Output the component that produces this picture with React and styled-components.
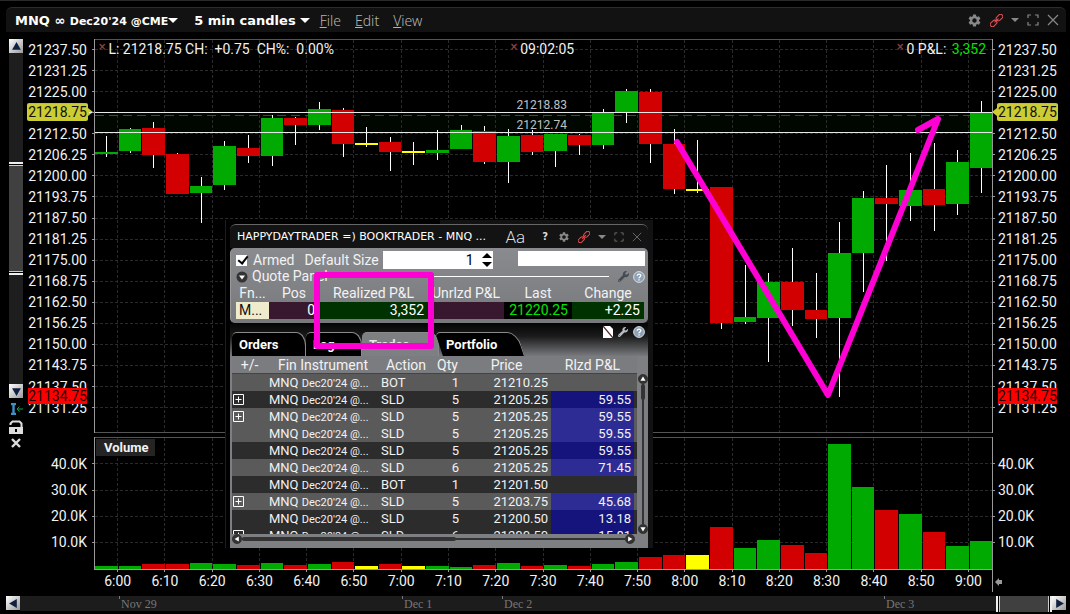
import React from 'react';
import styled, { createGlobalStyle, css } from 'styled-components';
import { MdSettings } from 'react-icons/md';
import { FaWrench } from 'react-icons/fa';

const GlobalStyle = createGlobalStyle`
* {
    box-sizing: border-box;
}

body {
    margin: 0;
    background: #000;
    color: #f2f2f2;
    font-family: Roboto, sans-serif;
    font-size: 14px;
}

button {
    padding: 0;
    border: 0;
    background: none;
    color: inherit;
    font: inherit;
}
`;

const UP = '#00aa00';
const DOWN = '#d20000';
const FLAT = '#ffff00';
const MARKER = '#ff00d4';

/* ---------- data ---------- */

// [colour, body top, body bottom, high, low, volume top]
const bars = [
    [UP, 152, 154, 136, 157, 566],
    [UP, 129, 151, 128, 153, 566],
    [DOWN, 128, 155, 122, 168, 564],
    [DOWN, 154, 194, 153, 194, 564],
    [UP, 186, 193, 177, 223, 563],
    [UP, 146, 185, 141, 190, 564],
    [DOWN, 148, 156, 135, 163, 565],
    [UP, 118, 156, 115, 166, 563],
    [DOWN, 118, 125, 117, 145, 565],
    [UP, 109, 125, 102, 130, 564],
    [DOWN, 110, 144, 108, 157, 562],
    [FLAT, 143, 145, 127, 147, 566],
    [DOWN, 142, 152, 137, 171, 564],
    [FLAT, 151, 153, 142, 165, 566],
    [UP, 150, 153, 130, 160, 566],
    [UP, 130, 149, 125, 149, 567],
    [DOWN, 131, 162, 126, 164, 565],
    [UP, 136, 162, 129, 183, 563],
    [DOWN, 135, 152, 130, 155, 566],
    [UP, 134, 151, 134, 167, 565],
    [DOWN, 135, 145, 134, 155, 566],
    [UP, 113, 145, 109, 149, 564],
    [UP, 91, 112, 89, 123, 562],
    [DOWN, 92, 144, 89, 163, 557],
    [DOWN, 144, 189, 129, 194, 555],
    [FLAT, 189, 191, 140, 193, 555],
    [DOWN, 187, 323, 187, 329, 527],
    [UP, 317, 322, 265, 324, 548],
    [UP, 282, 318, 273, 362, 540],
    [DOWN, 282, 310, 248, 326, 545],
    [DOWN, 310, 319, 273, 338, 553],
    [UP, 253, 318, 222, 397, 444],
    [UP, 198, 253, 191, 292, 487],
    [DOWN, 198, 204, 165, 261, 510],
    [UP, 190, 206, 153, 221, 514],
    [DOWN, 189, 205, 143, 231, 532],
    [UP, 162, 204, 150, 215, 546],
    [UP, 113, 168, 101, 193, 541],
];

const barX = i => Math.round(95 + 23.65 * i);

const gridX = [117, 164, 212, 259, 306, 353, 401, 448, 495, 543, 590, 637, 684, 732, 779, 826, 873, 921, 968];
const gridY = Array.from({ length: 18 }, (_, i) => 49 + 21 * i + (i >= 8 ? 1 : 0));
const volumeY = [463, 490, 516, 542];

const times = ['6:00', '6:10', '6:20', '6:30', '6:40', '6:50', '7:00', '7:10', '7:20', '7:30',
    '7:40', '7:50', '8:00', '8:10', '8:20', '8:30', '8:40', '8:50', '9:00'];
const prices = gridY.map((_, i) => (21237.5 - 6.25 * i).toFixed(2));
const volumes = ['40.0K', '30.0K', '20.0K', '10.0K'];

const trades = [
    { action: 'BOT', qty: 1, price: '21210.25', light: true },
    { open: true, action: 'SLD', qty: 5, price: '21205.25', pnl: '59.55' },
    { open: true, action: 'SLD', qty: 5, price: '21205.25', pnl: '59.55', light: true },
    { action: 'SLD', qty: 5, price: '21205.25', pnl: '59.55', light: true },
    { action: 'SLD', qty: 5, price: '21205.25', pnl: '59.55' },
    { action: 'SLD', qty: 6, price: '21205.25', pnl: '71.45', light: true },
    { action: 'BOT', qty: 1, price: '21201.50' },
    { open: true, action: 'SLD', qty: 5, price: '21203.75', pnl: '45.68', light: true },
    { action: 'SLD', qty: 5, price: '21200.50', pnl: '13.18' },
    { open: true, action: 'SLD', qty: 6, price: '21200.50', pnl: '15.81' },
];

/* ---------- frame ---------- */

const Desktop = styled.div`
position: relative;
min-width: 960px;
padding: 6px 4px 3px 6px;
border-top: 1px solid #2a2a2a;
`;

const TitleBar = styled.header`
display: flex;
align-items: center;
height: 25px;
padding: 0 7px 0 9px;
border-top: 1px solid #2c2c2c;
border-radius: 6px 6px 0 0;
background: #121212;
`;

const Picker = styled.button`
display: flex;
align-items: center;
gap: ${props => props.$gap}px;
margin-right: ${props => props.$space}px;
color: #fff;
font: 700 13px 'DejaVu Sans', sans-serif;
white-space: nowrap;

small {
    font-size: 11px;
}
`;

const Caret = styled.i`
width: 0;
border: ${props => props.$size}px solid transparent;
border-top-color: ${props => props.$color};
border-bottom: 0;
transform: ${props => props.$flip ? 'rotate(180deg)' : 'none'};
`;

const MenuButton = styled.button`
margin-right: 14px;
color: #b4b4ac;
font: 300 14px 'Noto Sans', sans-serif;

&::first-letter {
    text-decoration: underline;
}
`;

const WindowIcons = styled.div`
display: flex;
align-items: center;
gap: ${props => props.$gap}px;
margin-left: auto;
color: ${props => props.$color};

button {
    display: flex;
}
`;

/* ---------- chart ---------- */

const Main = styled.main`
display: flex;
margin-top: 7px;
`;

const Tools = styled.aside`
display: flex;
flex-direction: column;
align-items: center;
width: 14px;
margin-left: 3px;
`;

const ArrowButton = styled.button`
display: flex;
align-items: center;
justify-content: center;
width: 14px;
height: 14px;
flex: none;
background: linear-gradient(135deg, #fff, #9a9a9a);
`;

const Slider = styled.div`
display: flex;
flex-direction: column;
width: 14px;
height: 331px;
padding: 109px 0;
background: #1e1e1e;
`;

const SliderThumb = styled.div`
flex: 1;
background: linear-gradient(${props => props.$vertical ? '90deg' : '180deg'},
    #eee 2px, #000 2px 3px, #ccc 3px 4px,
    #404040 4px calc(100% - 4px),
    #ccc calc(100% - 4px) calc(100% - 3px), #000 calc(100% - 3px) calc(100% - 2px), #eee calc(100% - 2px));
`;

const ToolButton = styled.button`
display: flex;
height: 12px;
margin-top: 5px;
`;

const Plots = styled.div`
display: grid;
grid-template-columns: 71px 1fr 73px;
flex: 1;
min-width: 0;
`;

const Cell = styled.div`
position: relative;
margin-bottom: ${props => props.$gap || 0}px;
`;

const Graph = styled.svg`
display: block;
width: 100%;
height: ${props => props.$height}px;
overflow: visible;
shape-rendering: crispEdges;
`;

const PriceAxis = styled.ol`
display: flex;
flex-direction: column;
height: 379px;
margin: 0;
padding: ${props => props.$right ? '0 0 0 5px' : '0 7px 0 0'};
align-items: ${props => props.$right ? 'flex-start' : 'flex-end'};
list-style: none;
`;

const VolumeAxis = styled(PriceAxis)`
height: 118px;
padding-top: 14px;
`;

const Tick = styled.li`
display: flex;
align-items: center;
flex: 1;
line-height: 16px;
`;

const Tag = styled.b`
position: relative;
margin: 0 -1px;
padding: 0 1px;
border-radius: 2px;
background: #cccc33;
box-shadow: 0 -1px #e0a080;
color: #111;
font-weight: 400;
line-height: 17px;

&::after {
    content: '';
    position: absolute;
    top: 4px;
    ${props => props.$right ? 'left' : 'right'}: -5px;
    border: 4px solid transparent;
    border-width: ${props => props.$right ? '4px 5px 4px 0' : '4px 0 4px 5px'};
    border-left-color: #cccc33;
    border-right-color: #cccc33;
}
`;

const LowBadge = styled.span`
position: absolute;
top: 349px;
${props => props.$right ? 'left: 5px' : 'right: 7px'};
background: #ff0000;
color: #200;
line-height: 16px;
`;

const Overlay = styled.div`
position: absolute;
inset: 2px 7px auto 4px;
display: grid;
grid-template-columns: 1fr auto 1fr;
line-height: 16px;
white-space: pre;
`;

const Readout = styled.span`
display: flex;
gap: 2px;
justify-content: ${props => props.$end ? 'flex-end' : 'flex-start'};

em {
    color: #00e600;
    font-style: normal;
}
`;

const Cross = styled.i`
color: #884444;
font: 700 10px/12px 'DejaVu Sans', sans-serif;
`;

const LineLabel = styled.span`
position: absolute;
top: ${props => props.$top}px;
left: 50%;
margin-left: -27px;
color: #c0c0c0;
font-size: 12px;
line-height: 14px;
`;

const VolumeTitle = styled.h2`
position: absolute;
top: 2px;
left: 2px;
margin: 0;
padding: 0 6px 0 8px;
background: #242424;
font-size: 13px;
font-weight: 700;
line-height: 17px;
`;

const TimeAxis = styled.ol`
display: flex;
grid-column: 2;
height: 22px;
margin: 0;
padding: 3px 0 0;
border-right: 1px solid #999;
list-style: none;
text-align: center;
line-height: 17px;

li {
    flex: 1 1 0;
}
`;

const AxisArrow = styled.span`
padding: 8px 0 0 2px;
line-height: 0;
`;

const Timeline = styled.footer`
display: flex;
height: 15px;
margin-top: 4px;
`;

const TimelineTrack = styled.div`
display: grid;
grid-template-columns: 99fr 283fr 100fr 382fr 112fr 56fr;
flex: 1;
background: #1c1c1c;
`;

const DateMark = styled.span`
padding-left: 2px;
background: linear-gradient(#777, #777) no-repeat 0 0 / 1px 3px;
color: #777;
font: 12px/16px 'Liberation Serif', serif;
`;

/* ---------- BookTrader window ---------- */

const Floating = styled.section`
position: absolute;
top: 219px;
left: 225px;
width: 428px;
padding: 4px 5px 0 4px;
border-left: 1px solid #1d1d1d;
background: linear-gradient(90deg, #000 50%, #121212 50%);
`;

const FloatBar = styled.header`
display: flex;
align-items: center;
height: 24px;
padding: 0 6px 0 7px;
border-top: 1px solid #666;
border-radius: 6px 6px 0 0;
background: #131313;
color: #fff;
`;

const FloatTitle = styled.h1`
margin: 0;
font: 400 11px 'DejaVu Sans', sans-serif;
white-space: nowrap;
`;

const FontButton = styled.button`
margin-right: 9px;
color: #ddd;
font-size: 17px;
font-weight: 300;
`;

const HelpButton = styled.button`
margin-right: 2px;
color: #ddd;
font: 700 10px 'DejaVu Sans', sans-serif;
`;

const Quote = styled.div`
height: 75px;
padding: 3px 3px 0 5px;
border-left: 1px solid #999;
border-radius: 5px;
background: linear-gradient(#898b8f, #77797d);
`;

const OrderLine = styled.div`
display: flex;
align-items: flex-start;
height: 17px;
`;

const Armed = styled.label`
display: flex;
align-items: center;
gap: 6px;
margin-right: 10px;
line-height: 18px;
`;

const Check = styled.input`
position: relative;
width: 11px;
height: 11px;
margin: 0;
background: #fff;
appearance: none;

&:checked::after {
    content: '';
    position: absolute;
    top: -1px;
    left: 4px;
    width: 4px;
    height: 8px;
    border: solid #000;
    border-width: 0 2px 2px 0;
    transform: rotate(38deg);
}
`;

const SizeLabel = styled.label`
line-height: 18px;
`;

const SizeBox = styled.span`
display: flex;
align-items: center;
width: 110px;
height: 18px;
margin: 0 25px 0 4px;
background: #fff;
`;

const SizeInput = styled.input`
flex: 1;
min-width: 0;
padding: 0 8px 0 0;
border: 0;
background: none;
color: #000;
font: 14px Roboto, sans-serif;
text-align: right;
`;

const Spinner = styled.span`
display: flex;
flex-direction: column;
gap: 4px;
margin-right: 1px;

button {
    display: flex;
}
`;

const Note = styled.input`
flex: 1;
min-width: 0;
height: 15px;
padding: 0;
border: 0;
background: #fff;
`;

const QuoteHeading = styled.div`
display: flex;
align-items: center;
gap: 4px;
height: 17px;
line-height: 17px;
`;

const Rule = styled.hr`
flex: 1;
height: 1px;
margin: 0 5px 0 -3px;
border: 0;
background: #fff;
`;

const QuoteTable = styled.table`
width: 408px;
border-collapse: collapse;
table-layout: fixed;

th, td {
    height: 17px;
    padding: 0 4px 0 3px;
    font-weight: 400;
    line-height: 17px;
    white-space: nowrap;
}

th {
    padding: 0;
}
`;

const QuoteCell = styled.td`
background: ${props => props.$bg};
color: ${props => props.$color || '#fff'};
text-align: ${props => props.$align || 'right'};
`;

const TabStrip = styled.div`
display: flex;
align-items: flex-end;
height: 33px;
padding-left: 2px;
background: linear-gradient(#050505, #1a1a1a 40%, #77797d);
`;

const Tab = styled.button`
position: relative;
isolation: isolate;
width: ${props => props.$width}px;
height: 24px;
padding-left: 7px;
color: ${props => props.$active ? '#e8e8e8' : '#fff'};
font-size: 13px;
font-weight: 700;
text-align: left;

&::before {
    content: '';
    position: absolute;
    inset: 0;
    z-index: -1;
    border: solid #8a8a8a;
    border-width: 1px 1px 0 0;
    border-radius: 5px 10px 0 0 / 5px 14px 0 0;
    background: ${props => props.$active ? '#7d7f83' : '#000'};
    transform: ${props => props.$slanted ? 'skewX(18deg)' : 'none'};
}
`;

const TabIcons = styled.div`
display: flex;
gap: 5px;
margin: 0 3px 0 auto;
align-self: flex-start;
align-items: center;
padding-top: 3px;
`;

const TradesArea = styled.div`
display: grid;
grid-template-columns: 1fr 11px;
padding-left: 2px;
background: #7d7f83;
`;

const Clip = styled.div`
height: 178px;
overflow: hidden;
`;

const TradesTable = styled.table`
width: 100%;
border-collapse: collapse;
table-layout: fixed;
font-size: 13px;

th {
    height: 18px;
    padding: 0;
    background: #7a7c80;
    box-shadow: inset 0 -1px #444;
    font-size: 14px;
    font-weight: 400;
    line-height: 17px;
    white-space: nowrap;
}

td {
    height: 17px;
    padding: 0 3px 0 2px;
    line-height: 17px;
    white-space: nowrap;
}

td:first-child {
    padding: 0 0 0 1px;
}
`;

const TradeRow = styled.tr`
background: ${props => props.$light ? '#5a5a5a' : '#2c2c2c'};

small {
    font-size: 11px;
    line-height: 11px;
}
`;

const NumberCell = styled.td`
text-align: right;

${props => props.$pnl && css`
background: ${props.$light ? '#2c2c94' : '#14147c'};
`}
`;

const Expand = styled.button`
display: flex;
`;

const ScrollBar = styled.div`
display: flex;
flex-direction: ${props => props.$vertical ? 'column' : 'row'};
align-items: center;
padding: ${props => props.$vertical ? '18px 0 0' : '0 2px 4px 0'};
`;

const Rail = styled.div`
display: flex;
flex: 1;
align-self: center;
${props => props.$vertical ? 'width: 4px' : 'height: 4px'};
background: linear-gradient(${props => props.$vertical ? '90deg' : '180deg'}, transparent 25%, #333 25%, #333 75%, transparent 75%);
`;

const RailThumb = styled.div`
${props => props.$vertical ? 'width: 4px; height: 16px' : 'width: 56%'};
border-radius: 2px;
background: #333;
`;

const Highlight = styled.div`
position: absolute;
top: 52px;
left: 88px;
width: 120px;
height: 77px;
border: 6px solid ${MARKER};
border-radius: 3px;
pointer-events: none;
`;

/* ---------- icons ---------- */

function Triangle({ dir, color = '#102040', size = 11 }) {
    const points = {
        up: '5,1 9,8 1,8',
        down: '1,2 9,2 5,9',
        left: '8,1 8,9 1,5',
        right: '2,1 9,5 2,9',
    };
    return (
        <svg width={size} height={size} viewBox="0 0 10 10" aria-hidden="true">
            <polygon points={points[dir]} fill={color} />
        </svg>
    );
}

function ChainIcon({ size }) {
    return (
        <svg width={size} height={size} viewBox="0 0 14 14" fill="none" stroke="#e8484c" strokeWidth="1.2">
            <g transform="rotate(-45 7 7)">
                <rect x="-1.5" y="4.6" width="8" height="4.8" rx="2.4" />
                <rect x="7.5" y="4.6" width="8" height="4.8" rx="2.4" />
                <path d="M4 7h6" />
            </g>
        </svg>
    );
}

function ExpandIcon({ size }) {
    return (
        <svg width={size} height={size} viewBox="0 0 12 12" fill="none" stroke="currentColor" strokeWidth="1.2">
            <path d="M1 4V1h3M8 1h3v3M11 8v3H8M4 11H1V8" />
        </svg>
    );
}

function CloseIcon({ size }) {
    return (
        <svg width={size} height={size} viewBox="0 0 12 12" fill="none" stroke="currentColor" strokeWidth="1.2">
            <path d="M1 1l10 10M11 1L1 11" />
        </svg>
    );
}

function RoundArrow({ dir }) {
    const turn = { up: 0, right: 90, down: 180, left: 270 }[dir];
    return (
        <svg width="10" height="10" viewBox="0 0 10 10">
            <circle cx="5" cy="5" r="4.6" fill="#333" stroke="#222" strokeWidth=".6" />
            <path d="M5 2.6L7.6 6.8H2.4z" fill="#fff" transform={`rotate(${turn} 5 5)`} />
        </svg>
    );
}

function HelpIcon() {
    return (
        <svg width="12" height="12" viewBox="0 0 12 12">
            <circle cx="6" cy="6" r="5.4" fill="#8ea3b8" stroke="#d8dce0" />
            <path d="M4.2 4.8c0-2.3 3.6-2.3 3.6-.2C7.8 6 6 5.9 6 7.2M6 8.3v1.2" fill="none" stroke="#fff" strokeWidth="1.3" />
        </svg>
    );
}

function PlusBox() {
    return (
        <svg width="11" height="11" viewBox="0 0 11 11" fill="none" stroke="#fff">
            <path d="M.5.5h10v10H.5zM5.5 2.5v6M2.5 5.5h6" />
        </svg>
    );
}

/* ---------- parts ---------- */

function PriceGraph() {
    return (
        <Graph $height={394} viewBox="94 39 899 394" preserveAspectRatio="none">
            <rect x="95" y="113" width="897" height="19" fill="#000600" />
            <g stroke="#2a2a2a" strokeDasharray="3 2">
                {gridX.map(x => <path key={x} d={`M${x}.5 40V432`} />)}
                {gridY.map(y => <path key={y} d={`M95 ${y}.5H992`} />)}
            </g>
            <path d="M95 115.5H992" stroke="#3c4a3c" strokeDasharray="9 5" />
            {bars.map(([color, top, bottom, high, low], i) => (
                <g key={i}>
                    <rect x={barX(i) + 11} y={high} width="1" height={low - high} fill="#fff" />
                    <rect x={barX(i)} y={top} width={barX(i + 1) - barX(i) - 1} height={bottom - top} fill={color} />
                </g>
            ))}
            <path d="M89 112.5H992M95 132.5H992" stroke="#e8e8e8" />
            <path d="M94 39.5H993M94 432.5H993" stroke="#555" />
            <path d="M94.5 39V433M992.5 39V433" stroke="#999" />
            {gridY.map(y => <path key={y} d={`M92 ${y}.5h2M993 ${y}.5h2`} stroke="#999" />)}
            <path
                d="M677 142L828 395L938 119L918 130"
                fill="none"
                stroke={MARKER}
                strokeWidth="6"
                strokeLinecap="round"
                strokeLinejoin="round"
                shapeRendering="auto"
            />
        </Graph>
    );
}

function VolumeGraph() {
    return (
        <Graph $height={133} viewBox="94 437 899 133" preserveAspectRatio="none">
            <g stroke="#2a2a2a" strokeDasharray="3 2">
                {gridX.map(x => <path key={x} d={`M${x}.5 438V569`} />)}
                {volumeY.map(y => <path key={y} d={`M95 ${y}.5H992`} />)}
            </g>
            {bars.map((bar, i) => (
                <rect key={i} x={barX(i)} y={bar[5]} width={barX(i + 1) - barX(i) - 1} height={569 - bar[5]} fill={bar[0]} />
            ))}
            <path d="M94 437.5H993" stroke="#555" />
            <path d="M94 569.5H993M94.5 437V570M992.5 437V570" stroke="#999" />
            {volumeY.map(y => <path key={y} d={`M92 ${y}.5h2M993 ${y}.5h2`} stroke="#999" />)}
            {gridX.map(x => <path key={x} d={`M${x}.5 570v2`} stroke="#999" />)}
        </Graph>
    );
}

function Prices({ right }) {
    return (
        <Cell $gap={4}>
            <PriceAxis $right={right}>
                {prices.map(price => (
                    <Tick key={price}>
                        {price === '21218.75' ? <Tag $right={right}>{price}</Tag> : price}
                    </Tick>
                ))}
            </PriceAxis>
            <LowBadge $right={right}>21134.75</LowBadge>
        </Cell>
    );
}

function Volumes({ right }) {
    return (
        <VolumeAxis $right={right}>
            {volumes.map(volume => <Tick key={volume}>{volume}</Tick>)}
        </VolumeAxis>
    );
}

function ChartTools() {
    return (
        <Tools>
            <ArrowButton aria-label="Scroll up"><Triangle dir="up" /></ArrowButton>
            <Slider><SliderThumb /></Slider>
            <ArrowButton aria-label="Scroll down"><Triangle dir="down" /></ArrowButton>
            <ToolButton aria-label="Fit range">
                <svg width="13" height="12" viewBox="0 0 13 12">
                    <path d="M1 1h5M1 11h5M3.5 1v10" stroke="#3f8fc8" strokeWidth="2.4" />
                    <path d="M13 6H7M9.500 3.500L7 6l2.500 2.500" stroke="#00aa44" fill="none" />
                </svg>
            </ToolButton>
            <ToolButton aria-label="Unlock">
                <svg width="14" height="14" viewBox="0 0 14 14">
                    <path d="M1.5 5V3.500L3.500 1.500h7l2 2V8" stroke="#ddd" strokeWidth="2" fill="none" />
                    <path d="M0 7h14v7H0z" fill="#ddd" />
                    <path d="M6 9h2v3H6z" fill="#000" />
                </svg>
            </ToolButton>
            <ToolButton aria-label="Remove">
                <svg width="10" height="12" viewBox="0 0 10 12">
                    <path d="M1 2l8 8M9 2l-8 8" stroke="#ddd" strokeWidth="2.4" />
                </svg>
            </ToolButton>
        </Tools>
    );
}

function QuotePanel() {
    return (
        <Quote>
            <OrderLine>
                <Armed><Check type="checkbox" defaultChecked />Armed</Armed>
                <SizeLabel htmlFor="size">Default Size</SizeLabel>
                <SizeBox>
                    <SizeInput id="size" defaultValue="1" />
                    <Spinner>
                        <button aria-label="Increase"><Caret $size={5} $color="#000" $flip /></button>
                        <button aria-label="Decrease"><Caret $size={5} $color="#000" /></button>
                    </Spinner>
                </SizeBox>
                <Note aria-label="Note" />
            </OrderLine>
            <QuoteHeading>
                <svg width="12" height="12" viewBox="0 0 12 12">
                    <circle cx="6" cy="6" r="5.5" fill="#333" />
                    <path d="M3 4.5h6L6 8.500z" fill="#fff" />
                </svg>
                Quote Panel
                <Rule />
                <FaWrench size={11} color="#444b52" />
                <HelpIcon />
            </QuoteHeading>
            <QuoteTable>
                <colgroup>
                    <col width="33" /><col width="50" /><col width="109" />
                    <col width="76" /><col width="68" /><col width="72" />
                </colgroup>
                <thead>
                    <tr>
                        <th>Fn...</th><th>Pos</th><th>Realized P&amp;L</th>
                        <th>Unrlzd P&amp;L</th><th>Last</th><th>Change</th>
                    </tr>
                </thead>
                <tbody>
                    <tr>
                        <QuoteCell $bg="#eeeccc" $color="#111" $align="left">M...</QuoteCell>
                        <QuoteCell $bg="#38182e">0</QuoteCell>
                        <QuoteCell $bg="#003200">3,352</QuoteCell>
                        <QuoteCell $bg="#38182e" />
                        <QuoteCell $bg="#000" $color="#00e600">21220.25</QuoteCell>
                        <QuoteCell $bg="#003200">+2.25</QuoteCell>
                    </tr>
                </tbody>
            </QuoteTable>
        </Quote>
    );
}

function TradesList() {
    return (
        <TradesArea>
            <Clip>
                <TradesTable>
                    <colgroup>
                        <col width="35" /><col width="112" /><col width="54" />
                        <col width="29" /><col width="89" /><col /><col width="3" />
                    </colgroup>
                    <thead>
                        <tr>
                            <th>+/-</th><th>Fin Instrument</th><th>Action</th>
                            <th>Qty</th><th>Price</th><th>Rlzd P&amp;L</th><th />
                        </tr>
                    </thead>
                    <tbody>
                        {trades.map((trade, i) => (
                            <TradeRow key={i} $light={trade.light}>
                                <td>{trade.open && <Expand aria-label="Expand"><PlusBox /></Expand>}</td>
                                <td>MNQ <small>Dec20'24 @...</small></td>
                                <td>{trade.action}</td>
                                <NumberCell>{trade.qty}</NumberCell>
                                <NumberCell>{trade.price}</NumberCell>
                                <NumberCell $pnl={trade.pnl} $light={trade.light}>{trade.pnl}</NumberCell>
                                <td />
                            </TradeRow>
                        ))}
                    </tbody>
                </TradesTable>
            </Clip>
            <ScrollBar $vertical>
                <RoundArrow dir="up" />
                <Rail $vertical><RailThumb $vertical /></Rail>
                <RoundArrow dir="down" />
            </ScrollBar>
            <ScrollBar>
                <RoundArrow dir="left" />
                <Rail><RailThumb /></Rail>
                <RoundArrow dir="right" />
            </ScrollBar>
        </TradesArea>
    );
}

function BookTrader() {
    return (
        <Floating>
            <FloatBar>
                <FloatTitle>HAPPYDAYTRADER =) BOOKTRADER - MNQ ...</FloatTitle>
                <WindowIcons $gap={8} $color="#666">
                    <FontButton>Aa</FontButton>
                    <HelpButton>?</HelpButton>
                    <button aria-label="Settings"><MdSettings size={12} color="#888" /></button>
                    <button aria-label="Group"><ChainIcon size={12} /></button>
                    <Caret $size={4} $color="#888" />
                    <button aria-label="Maximize"><ExpandIcon size={10} /></button>
                    <button aria-label="Close"><CloseIcon size={10} /></button>
                </WindowIcons>
            </FloatBar>
            <QuotePanel />
            <TabStrip role="tablist">
                <Tab role="tab" $width={74}>Orders</Tab>
                <Tab role="tab" $width={56}>Log</Tab>
                <Tab role="tab" $width={77} $active>Trades</Tab>
                <Tab role="tab" $width={82} $slanted>Portfolio</Tab>
                <TabIcons>
                    <svg width="10" height="12" viewBox="0 0 10 12">
                        <path d="M0 0h7l3 3v9H0z" fill="#fff" />
                        <path d="M0 0l10 12" stroke="#502020" strokeWidth="1.2" />
                    </svg>
                    <FaWrench size={10} color="#b8bcc0" />
                    <HelpIcon />
                </TabIcons>
            </TabStrip>
            <TradesList />
            <Highlight />
        </Floating>
    );
}

function App() {
    return (
        <Desktop>
            <GlobalStyle />
            <TitleBar>
                <Picker $gap={0} $space={16}><span>MNQ ∞ <small>Dec20'24 @CME</small></span><Caret $size={5} $color="#fff" /></Picker>
                <Picker $gap={4} $space={10}>5 min candles<Caret $size={5} $color="#fff" /></Picker>
                <MenuButton>File</MenuButton>
                <MenuButton>Edit</MenuButton>
                <MenuButton>View</MenuButton>
                <WindowIcons $gap={8} $color="#888">
                    <button aria-label="Settings"><MdSettings size={15} color="#888" /></button>
                    <button aria-label="Group"><ChainIcon size={13} /></button>
                    <Caret $size={4} $color="#888" />
                    <button aria-label="Maximize"><ExpandIcon size={12} /></button>
                    <button aria-label="Close"><CloseIcon size={12} /></button>
                </WindowIcons>
            </TitleBar>
            <Main>
                <ChartTools />
                <Plots>
                    <Prices />
                    <Cell $gap={4}>
                        <PriceGraph />
                        <Overlay>
                            <Readout><Cross>×</Cross>L: 21218.75 CH:  +0.75  CH%:  0.00%</Readout>
                            <Readout><Cross>×</Cross>09:02:05</Readout>
                            <Readout $end><Cross>×</Cross>0 P&amp;L: <em>3,352</em></Readout>
                        </Overlay>
                        <LineLabel $top={59}>21218.83</LineLabel>
                        <LineLabel $top={79}>21212.74</LineLabel>
                    </Cell>
                    <Prices right />
                    <Volumes />
                    <Cell>
                        <VolumeGraph />
                        <VolumeTitle>Volume</VolumeTitle>
                    </Cell>
                    <Volumes right />
                    <TimeAxis>
                        {times.map(time => <li key={time}>{time}</li>)}
                    </TimeAxis>
                    <AxisArrow>
                        <svg width="7" height="8" viewBox="0 0 7 8">
                            <path d="M4 0v2h3v4H4v2L0 4z" fill="#999" />
                        </svg>
                    </AxisArrow>
                </Plots>
            </Main>
            <Timeline>
                <ArrowButton aria-label="Scroll left"><Triangle dir="left" /></ArrowButton>
                <TimelineTrack>
                    <span />
                    <DateMark>Nov 29</DateMark>
                    <DateMark>Dec 1</DateMark>
                    <DateMark>Dec 2</DateMark>
                    <DateMark>Dec 3</DateMark>
                    <SliderThumb $vertical />
                </TimelineTrack>
                <ArrowButton aria-label="Scroll right"><Triangle dir="right" /></ArrowButton>
            </Timeline>
            <BookTrader />
        </Desktop>
    );
}

export default App;
